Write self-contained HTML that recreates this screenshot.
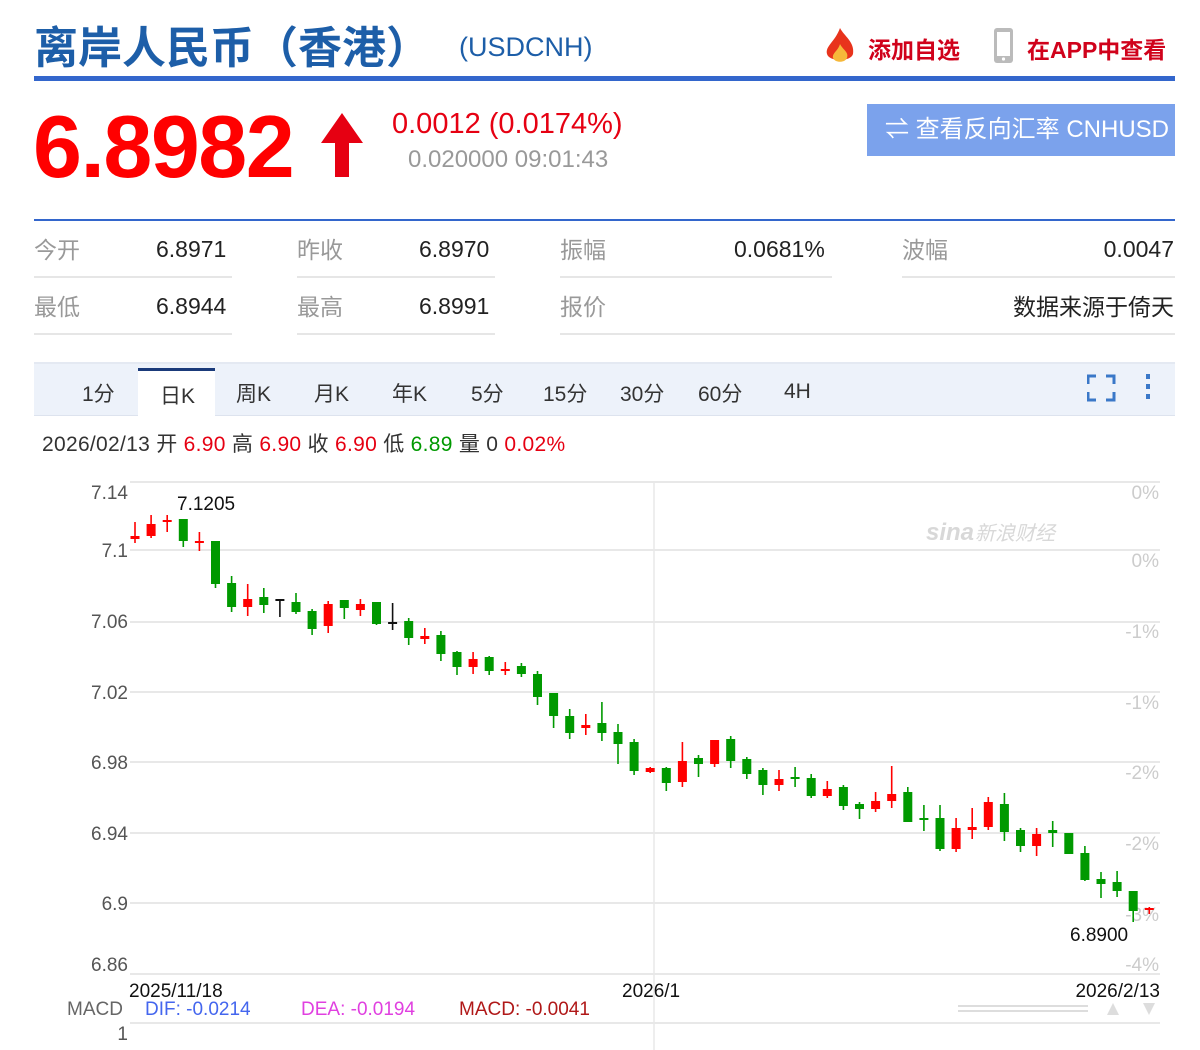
<!DOCTYPE html>
<html><head><meta charset="utf-8">
<style>
*{margin:0;padding:0;box-sizing:border-box}
body{width:1200px;height:1050px;background:#fff;font-family:"Liberation Sans","Noto Sans CJK SC",sans-serif;position:relative;overflow:hidden}
.a{position:absolute;white-space:nowrap}
.lbl{color:#999;font-size:23px}
.val{color:#222;font-size:23px}
.ln{position:absolute;height:2px;background:#e6e6e6}
</style></head><body>
<div class="a" style="left:34px;top:12px;font-size:44px;font-weight:bold;color:#1d5ea8;letter-spacing:0px">离岸人民币（香港）</div>
<div class="a" style="left:459px;top:32px;font-size:27px;color:#1d5ea8">(USDCNH)</div>
<svg class="a" style="left:821px;top:26px" width="38" height="40" viewBox="0 0 38 40"><path d="M19 2 C23 10 34 16 32 28 C30 36 8 36 6 28 C4 20 14 16 19 2Z" fill="#e8331c"/><path d="M19 18 C22 24 28 26 26 32 C24 37 14 37 12 32 C11 27 17 25 19 18Z" fill="#f6b83a"/></svg>
<div class="a" style="left:868px;top:31px;font-size:23px;font-weight:bold;color:#d0021b">添加自选</div>
<svg class="a" style="left:992px;top:27px" width="24" height="38"><rect x="2" y="1" width="19" height="35" rx="3" fill="#bbb"/><rect x="5" y="5" width="13" height="24" fill="#fff"/><circle cx="11.5" cy="32" r="1.6" fill="#fff"/></svg>
<div class="a" style="left:1027px;top:31px;font-size:23px;font-weight:bold;color:#d0021b">在APP中查看</div>
<div class="a" style="left:34px;top:76px;width:1141px;height:5px;background:#3366cc"></div>

<div class="a" style="left:33px;top:96px;font-size:88px;font-weight:bold;color:#f00;letter-spacing:-1.5px">6.8982</div>
<svg class="a" style="left:318px;top:112px" width="48" height="66"><path d="M24 1 L45 31 L31 31 L31 65 L17 65 L17 31 L3 31Z" fill="#e60012"/></svg>
<div class="a" style="left:392px;top:108px;font-size:29px;color:#e60012">0.0012 (0.0174%)</div>
<div class="a" style="left:408px;top:146px;font-size:24px;color:#999">0.020000 09:01:43</div>
<div class="a" style="left:867px;top:104px;width:308px;height:52px;background:#7ba2ec;color:#fff;font-size:24px;line-height:52px;padding-left:18px">⇌ 查看反向汇率 CNHUSD</div>

<div class="a" style="left:34px;top:219px;width:1141px;height:2px;background:#3366cc"></div>
<div class="a lbl" style="left:34px;top:231px">今开</div><div class="a val" style="left:156px;top:236px">6.8971</div>
<div class="a lbl" style="left:297px;top:231px">昨收</div><div class="a val" style="left:419px;top:236px">6.8970</div>
<div class="a lbl" style="left:560px;top:231px">振幅</div><div class="a val" style="left:734px;top:236px">0.0681%</div>
<div class="a lbl" style="left:902px;top:231px">波幅</div><div class="a val" style="right:26px;top:236px">0.0047</div>
<div class="ln" style="left:34px;top:276px;width:198px"></div><div class="ln" style="left:297px;top:276px;width:198px"></div><div class="ln" style="left:560px;top:276px;width:272px"></div><div class="ln" style="left:902px;top:276px;width:273px"></div>
<div class="a lbl" style="left:34px;top:288px">最低</div><div class="a val" style="left:156px;top:293px">6.8944</div>
<div class="a lbl" style="left:297px;top:288px">最高</div><div class="a val" style="left:419px;top:293px">6.8991</div>
<div class="a lbl" style="left:560px;top:288px">报价</div><div class="a val" style="right:26px;top:288px">数据来源于倚天</div>
<div class="ln" style="left:34px;top:333px;width:198px"></div><div class="ln" style="left:297px;top:333px;width:198px"></div><div class="ln" style="left:560px;top:333px;width:615px"></div>

<div class="a" style="left:34px;top:362px;width:1141px;height:54px;background:#edf2fa;border-top:2px solid #e4e9f2;border-bottom:1px solid #dde3ee"></div>
<div class="a" style="left:138px;top:368px;width:77px;height:50px;background:#fff;border-top:3px solid #1a3a7a"></div>
<div class="a" style="top:378px;left:82px;font-size:21px;color:#333">1分</div>
<div class="a" style="top:380px;left:160px;font-size:21px;color:#333">日K</div>
<div class="a" style="top:378px;left:236px;font-size:21px;color:#333">周K</div>
<div class="a" style="top:378px;left:314px;font-size:21px;color:#333">月K</div>
<div class="a" style="top:378px;left:392px;font-size:21px;color:#333">年K</div>
<div class="a" style="top:378px;left:471px;font-size:21px;color:#333">5分</div>
<div class="a" style="top:378px;left:543px;font-size:21px;color:#333">15分</div>
<div class="a" style="top:378px;left:620px;font-size:21px;color:#333">30分</div>
<div class="a" style="top:378px;left:698px;font-size:21px;color:#333">60分</div>
<div class="a" style="top:380px;left:784px;font-size:21px;color:#333">4H</div>
<svg class="a" style="left:1087px;top:374px" width="76" height="28"><g stroke="#3a78c8" stroke-width="3" fill="none"><path d="M1 10V2H9M19 2H27V10M27 18V26H19M9 26H1V18"/></g><g fill="#3a78c8"><rect x="59" y="0" width="4" height="5"/><rect x="59" y="10" width="4" height="5"/><rect x="59" y="20" width="4" height="5"/></g></svg>

<div class="a" style="left:42px;top:428px;font-size:21px;letter-spacing:0.3px;color:#333">2026/02/13 开 <span style="color:#e60012">6.90</span> 高 <span style="color:#e60012">6.90</span> 收 <span style="color:#e60012">6.90</span> 低 <span style="color:#090">6.89</span> 量 0 <span style="color:#e60012">0.02%</span></div>

<svg class="a" style="left:0;top:0" width="1200" height="1050" id="ch">
<g stroke="#e8e8e8" stroke-width="2">
<line x1="130" y1="482" x2="1160" y2="482"/><line x1="130" y1="550" x2="1160" y2="550"/><line x1="130" y1="622" x2="1160" y2="622"/><line x1="130" y1="692" x2="1160" y2="692"/><line x1="130" y1="762" x2="1160" y2="762"/><line x1="130" y1="833" x2="1160" y2="833"/><line x1="130" y1="903" x2="1160" y2="903"/><line x1="130" y1="974" x2="1160" y2="974"/><line x1="130" y1="1023" x2="1160" y2="1023"/>
<line x1="654" y1="482" x2="654" y2="1050" stroke-width="1.5"/>
</g>
<g font-family="Liberation Sans" font-size="19" fill="#555" text-anchor="end">
<text x="128" y="499">7.14</text><text x="128" y="557">7.1</text><text x="128" y="628">7.06</text><text x="128" y="699">7.02</text><text x="128" y="769">6.98</text><text x="128" y="840">6.94</text><text x="128" y="910">6.9</text><text x="128" y="971">6.86</text>
</g>
<g font-family="Liberation Sans" font-size="19" fill="#ccc" text-anchor="end">
<text x="1159" y="499">0%</text><text x="1159" y="567">0%</text><text x="1159" y="638">-1%</text><text x="1159" y="709">-1%</text><text x="1159" y="779">-2%</text><text x="1159" y="850">-2%</text><text x="1159" y="921">-3%</text><text x="1159" y="971">-4%</text>
</g>
<text x="926" y="540" font-family="Liberation Sans" font-size="24" font-weight="bold" font-style="italic" fill="#d8d8d8">sina</text>
<text x="975" y="540" font-family="Noto Sans CJK SC" font-size="20" font-style="italic" fill="#d8d8d8">新浪财经</text>
<text x="177" y="510" font-family="Liberation Sans" font-size="19" fill="#111">7.1205</text>
<text x="1070" y="941" font-family="Liberation Sans" font-size="19" fill="#111">6.8900</text>
<g font-family="Liberation Sans" font-size="19" fill="#111">
<text x="129" y="997">2025/11/18</text><text x="622" y="997">2026/1</text><text x="1160" y="997" text-anchor="end">2026/2/13</text>
</g>
<g font-family="Liberation Sans" font-size="19">
<text x="67" y="1015" fill="#666">MACD</text><text x="145" y="1015" fill="#4466ee">DIF: -0.0214</text><text x="301" y="1015" fill="#e040e0">DEA: -0.0194</text><text x="459" y="1015" fill="#b01818">MACD: -0.0041</text>
<text x="128" y="1040" fill="#555" text-anchor="end">1</text>
</g>
<g fill="#ddd"><rect x="958" y="1005" width="130" height="2"/><rect x="958" y="1010" width="130" height="2"/><path d="M1107 1015 L1113 1003 L1119 1015Z"/><path d="M1143 1003 L1155 1003 L1149 1015Z"/></g>
<g id="cd"></g>
</svg>
<script>
var d=[
[536,539,522,543,'r'],[524,536,515,538,'r'],[520,522,515,532,'r'],[519,541,519,547,'g'],[541,543,532,551,'r'],
[541,584,541,588,'g'],[583,607,576,612,'g'],[599,607,584,616,'r'],[597,605,588,613,'g'],[599,600,599,617,'k'],
[602,612,593,614,'g'],[611,629,609,635,'g'],[604,626,601,633,'r'],[600,608,600,619,'g'],[604,610,599,616,'r'],
[602,624,602,625,'g'],[622,623,603,630,'k'],[621,638,618,645,'g'],[636,639,628,644,'r'],[635,654,631,661,'g'],
[652,667,651,675,'g'],[659,667,652,674,'r'],[657,671,656,675,'g'],[669,671,662,675,'r'],[666,674,663,677,'g'],
[674,697,671,705,'g'],[693,716,693,728,'g'],[716,733,709,739,'g'],[725,728,714,735,'r'],[723,733,702,741,'g'],
[732,744,724,764,'g'],[742,771,739,775,'g'],[768,772,767,773,'r'],[768,783,767,791,'g'],[761,782,742,787,'r'],
[758,764,755,777,'g'],[740,764,740,767,'r'],[739,761,736,768,'g'],[759,774,757,779,'g'],[770,785,768,795,'g'],
[779,785,770,791,'r'],[777,779,767,787,'g'],[778,796,774,798,'g'],[789,796,781,798,'r'],[787,806,785,810,'g'],
[804,809,802,819,'g'],[801,809,792,812,'r'],[794,801,766,808,'r'],[792,822,787,822,'g'],[818,820,805,831,'g'],
[818,849,805,851,'g'],[828,849,818,852,'r'],[827,830,808,839,'r'],[802,827,797,830,'r'],[804,832,793,841,'g'],
[830,846,828,852,'g'],[834,846,828,856,'r'],[830,833,821,847,'g'],[833,854,833,854,'g'],[853,880,846,881,'g'],
[879,884,872,898,'g'],[882,891,871,897,'g'],[891,911,891,922,'g'],[908,910,907,914,'r']];
var c={r:'#f00',g:'#090',k:'#111'},s='';
for(var i=0;i<d.length;i++){var x=135+i*16.1,e=d[i],col=c[e[4]],h=Math.max(e[1]-e[0],2);
s+='<line x1="'+x+'" y1="'+e[2]+'" x2="'+x+'" y2="'+e[3]+'" stroke="'+col+'" stroke-width="1.6"/>';
s+='<rect x="'+(x-4.5)+'" y="'+e[0]+'" width="9" height="'+h+'" fill="'+col+'"/>';}
document.getElementById('cd').innerHTML=s;
</script>
</body></html>
